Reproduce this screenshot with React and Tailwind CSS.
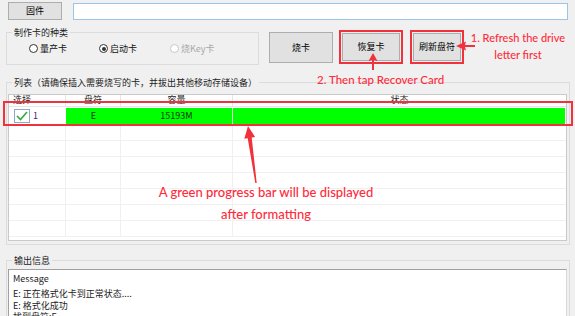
import React from 'react';

const ui = { fontFamily: '"Noto Sans CJK SC", "Noto Sans", sans-serif' };
const note = { fontFamily: 'Lato, "Open Sans", sans-serif' };

function Radio({ label, checked, disabled }) {
  return (
    <div className="flex items-center gap-[2px]">
      <span
        className={`w-[9px] h-[9px] rounded-full border bg-white flex items-center justify-center ${disabled ? 'border-[#c8c8c8]' : 'border-[#333]'}`}
      >
        {checked && <span className="w-[4px] h-[4px] rounded-full bg-[#333]" />}
      </span>
      <span className={disabled ? 'text-[#a8a8a8]' : 'text-[#111]'}>{label}</span>
    </div>
  );
}

function Group({ label, className = '', children }) {
  return (
    <div className={`border border-[#dcdcdc] ${className}`}>
      <div className="-mt-[6px] ml-[5px] px-[2px] w-fit h-[11px] leading-[11px] bg-[#f0f0f0] text-[#222]">{label}</div>
      {children}
    </div>
  );
}

export default function App() {
  const emptyRows = [0, 1, 2, 3, 4, 5, 6];
  return (
    <div className="relative w-[575px] h-[316px] overflow-hidden bg-[#f0f0f0] text-[9px]" style={ui}>
      <div className="flex items-start gap-[11px] pt-[2px] pl-[8px] pr-[7px]">
        <div className="w-[54px] h-[18px] flex items-center justify-center bg-[#e1e1e1] border border-[#adadad]">固件</div>
        <div className="flex-1 mt-[1px] h-[17px] bg-white border border-[#9cc3ea]" />
      </div>

      <div className="flex items-start mt-[10px]">
        <Group label="制作卡的种类" className="mt-[2px] ml-[6px] w-[253px] h-[33px]">
          <div className="flex items-center mt-[4px] pl-[22px]">
            <div className="w-[70px]"><Radio label="量产卡" /></div>
            <div className="w-[71px]"><Radio label="启动卡" checked /></div>
            <Radio label="烧Key卡" disabled />
          </div>
        </Group>
        <div className="mt-[2px] ml-[10px] w-[64px] h-[31px] flex items-center justify-center bg-[#e1e1e1] border border-[#adadad]">烧卡</div>
        <div className="ml-[6px] w-[64px] h-[34px] border-2 border-[#f0323c] p-[1px]">
          <div className="w-full h-full flex items-center justify-center bg-[#e1e1e1] border border-[#adadad]">恢复卡</div>
        </div>
        <div className="ml-[7px] w-[54px] h-[34px] border-2 border-[#f0323c] p-[1px]">
          <div className="w-full h-full flex items-center justify-center bg-[#e1e1e1] border border-[#adadad]">刷新盘符</div>
        </div>
      </div>

      <Group label="列表（请确保插入需要烧写的卡，并拔出其他移动存储设备）" className="mt-[17px] ml-[6px] w-[564px] h-[163px]">
        <div className="mt-[6px] ml-[1px] w-[559px] h-[147px] bg-white border border-[#c9c9c9] overflow-hidden">
          <div className="grid grid-cols-[57px_55px_112px_1fr] h-[12px] leading-[10px] border-b border-[#e5e5e5] text-[#222]">
            <div className="pl-[4px] border-r border-[#e5e5e5]">选择</div>
            <div className="text-center border-r border-[#e5e5e5]">盘符</div>
            <div className="text-center border-r border-[#e5e5e5]">容量</div>
            <div className="text-center">状态</div>
          </div>
          <div className="grid grid-cols-[57px_55px_112px_1fr] h-[18px] pt-[1px] border-b border-[#f0f0f0]">
            <div className="flex items-center pl-[5px] gap-[3px]">
              <span className="w-[16px] h-[14px] bg-white border border-[#8fa8c8] flex items-center justify-center">
                <svg width="12" height="10" viewBox="0 0 12 10">
                  <path d="M1 5 L4.5 8.5 L11 1" fill="none" stroke="#35a83a" strokeWidth="1.6" />
                </svg>
              </span>
              <span className="text-[#4b2380]">1</span>
            </div>
            <div className="bg-[#00ff00] flex items-center justify-center text-[#113311]">E</div>
            <div className="bg-[#00ff00] flex items-center justify-center text-[#113311] border-r border-[#d8f5d8]">15193M</div>
            <div className="bg-[#00ff00] mr-[1px]" />
          </div>
          {emptyRows.map(i => (
            <div key={i} className="grid grid-cols-[57px_55px_112px_1fr] h-[16px] border-b border-[#f0f0f0]">
              <div className="border-r border-[#f0f0f0]" />
              <div className="border-r border-[#f0f0f0]" />
              <div className="border-r border-[#f0f0f0]" />
              <div />
            </div>
          ))}
        </div>
      </Group>

      <Group label="输出信息" className="mt-[15px] ml-[6px] w-[564px] h-[80px]">
        <div className="mt-[3px] ml-[1px] w-[559px] h-[60px] bg-white border-t border-l border-[#a0a0a0] border-r border-r-[#d8d8d8] pl-[4px] pt-[3px] text-[#222]">
          <div className="leading-[12px]">Message</div>
          <div className="mt-[3px] leading-[11.5px]">E: 正在格式化卡到正常状态....</div>
          <div className="leading-[11.5px]">E: 格式化成功</div>
          <div className="leading-[11.5px]">找到盘符:E</div>
        </div>
      </Group>

      {/* annotations */}
      <div className="absolute left-[3px] top-[101px] w-[570px] h-[25px] border-2 border-[#f0323c]" />
      <svg className="absolute left-0 top-0" width="575" height="316" viewBox="0 0 575 316">
        <polygon points="248,126 255.1,137.1 251.7,137.6 256.7,182.9 255.3,183.1 247.7,138.2 244.3,138.7" fill="#f0323c" />
        <polygon points="373,53 377.5,61 374,60 374,70 372,70 372,60 368.5,61" fill="#f0323c" />
        <polygon points="456,46 466,41.5 465,45 475,45 475,47 465,47 466,50.5" fill="#f0323c" />
      </svg>
      <div className="absolute left-[468px] top-[29px] w-[100px] text-center text-[11px] leading-[17px] font-medium text-[#ff2a3a]" style={note}>
        <div>1. Refresh the drive</div>
        <div>letter first</div>
      </div>
      <div className="absolute left-[317px] top-[72px] text-[11.5px] leading-[16px] font-medium text-[#ff2a3a]" style={note}>2. Then tap Recover Card</div>
      <div className="absolute left-[140px] top-[181px] w-[252px] text-center text-[13px] leading-[22px] font-medium text-[#ff2a3a]" style={note}>
        <div>A green progress bar will be displayed</div>
        <div>after formatting</div>
      </div>
    </div>
  );
}
